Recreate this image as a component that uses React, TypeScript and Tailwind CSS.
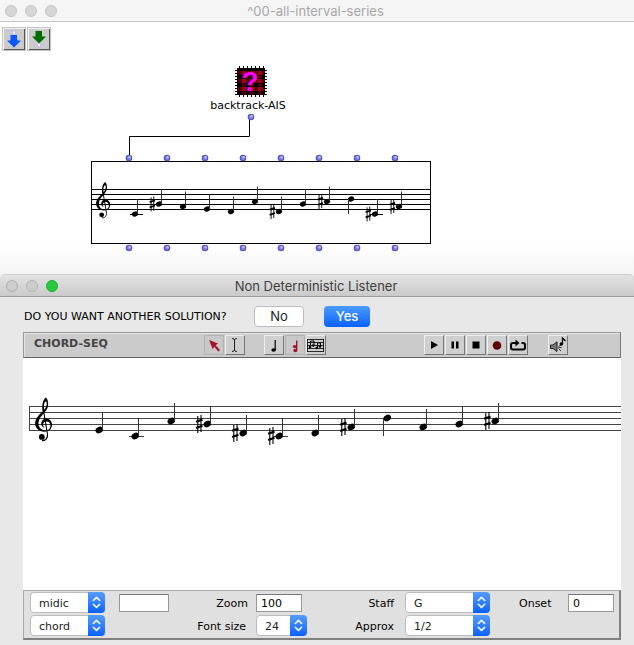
import type { ReactNode } from "react";

type Note = { step: number; sharp?: boolean; down?: boolean };

// step counts diatonic degrees above middle C
const PATCH_NOTES: Note[] = [
  { step: 0 },
  { step: 4, sharp: true },
  { step: 3 },
  { step: 2 },
  { step: 1 },
  { step: 5 },
  { step: 1, sharp: true },
  { step: 4 },
  { step: 5, sharp: true },
  { step: 6, down: true },
  { step: 0, sharp: true },
  { step: 3, sharp: true },
];

const LISTENER_NOTES: Note[] = [
  { step: 2 },
  { step: 0 },
  { step: 5 },
  { step: 4, sharp: true },
  { step: 1, sharp: true },
  { step: 0, sharp: true },
  { step: 1 },
  { step: 3, sharp: true },
  { step: 6, down: true },
  { step: 3 },
  { step: 4 },
  { step: 5, sharp: true },
];

function Clef({ x, y, scale }: { x: number; y: number; scale: number }) {
  return (
    <g transform={`translate(${x} ${y}) scale(${scale})`}>
      <path d="M7.8 14.5C6.6 9 7.4 2.5 11 0C13 2 13.6 5.5 13 8.5C12 14 6.8 17.2 4.8 21C3 24.5 3 28 5 30.5C7 33 10.5 33.4 13 32.4C16 31 16.4 26.5 13.6 24.6C11.5 23.3 8.3 24.3 8 27C7.9 28.6 8.8 29.8 10 30.3C7.3 30 5.8 27.5 6.3 25C7 21.5 11.5 20 14.4 22C18 24.5 18 30.5 14.2 33C10.5 35 4.5 34.4 1.8 30.8C-1 27 0 22.5 2.8 19C5 16.2 7 15 9 12.6C11 10.3 11.9 8 11.7 5.5C11.5 3.8 10.6 3.6 9.8 4.8C8.8 6.5 8.8 9.5 9.2 12Z" />
      <path d="M8.3 12L12.4 36C13.2 40.5 10.5 43.6 7 43" fill="none" stroke="black" strokeWidth="1.1" />
      <circle cx="6.8" cy="39.4" r="2.9" />
    </g>
  );
}

function Staff(props: { top: number; space: number; first: number; pitch: number; notes: Note[]; left: number; clefX: number; line: string }) {
  const { top, space, first, pitch, notes, left, clefX, line } = props;
  const u = space / 6;
  const c4 = top + space * 5;
  return (
    <>
      {[0, 1, 2, 3, 4].map((i) => (
        <line key={i} x1={left} x2="100%" y1={top + i * space} y2={top + i * space} stroke={line} shapeRendering="crispEdges" />
      ))}
      <Clef x={clefX} y={top - 9 * u} scale={u} />
      {notes.map((n, i) => {
        const x = first + i * pitch;
        const y = c4 - (n.step * space) / 2 - 0.5;
        const sx = Math.floor(n.down ? x - 3.6 * u : x + 3 * u) + 0.5;
        return (
          <g key={i}>
            {n.step === 0 && <line x1={x - 6 * u} x2={x + 9 * u} y1={c4} y2={c4} stroke={line} shapeRendering="crispEdges" />}
            <ellipse cx={x} cy={y} rx={3.9 * u} ry={3.1 * u} transform={`rotate(-25 ${x} ${y})`} />
            <line x1={sx} x2={sx} y1={y} y2={n.down ? y + 18 * u : y - 18 * u} stroke="#333" />
            {n.sharp && (
              <g transform={`translate(${x - 8 * u} ${y}) scale(${u})`} stroke="black">
                <path d="M-1.5 -8V9M1.7 -9V8" strokeWidth="1.1" />
                <path d="M-3.2 -2.2L3.2 -4.4M-3.2 4L3.2 1.8" strokeWidth="2.2" />
              </g>
            )}
          </g>
        );
      })}
    </>
  );
}

function Ports() {
  return (
    <div className="flex gap-8 pl-[35px]">
      {Array.from({ length: 8 }, (_, i) => (
        <Port key={i} />
      ))}
    </div>
  );
}

function Port() {
  return (
    <svg className="block h-1.5 w-1.5 shrink-0 overflow-visible" viewBox="0 0 6 6">
      <circle cx="3" cy="3" r="3.3" fill="#5051a8" />
      <circle cx="3" cy="3" r="2.4" fill="#7677e0" />
      <circle cx="3.6" cy="2.3" r="1.2" fill="#b9bcff" />
    </svg>
  );
}

function Light({ tone }: { tone: string }) {
  return <button aria-label="Window control" className={`h-3 w-3 rounded-full border ${tone}`} />;
}

function ArrowTool({ label, children }: { label: string; children: ReactNode }) {
  return (
    <button aria-label={label} className="h-6 w-6 border border-[#c4c4c4] bg-[#cbcbcb] shadow-[inset_1px_1px_0_#f4f4f4,inset_-1px_-1px_0_#555]">
      <svg className="block h-[22px] w-[22px]" viewBox="0 0 22 22">{children}</svg>
    </button>
  );
}

function Tool({ label, pressed, children }: { label: string; pressed?: boolean; children: ReactNode }) {
  return (
    <button
      aria-label={label}
      className={
        pressed
          ? "h-5 w-5 border border-[#b3b3b3] bg-[#c8c8c8]"
          : "h-5 w-5 border border-t-[#efefef] border-l-[#efefef] border-r-[#777] border-b-[#777] bg-[#cfcfcf]"
      }
    >
      <svg className="block h-[18px] w-[18px]" viewBox="0 0 18 18">{children}</svg>
    </button>
  );
}

function Picker({ id, label, options, width }: { id: string; label?: string; options: string[]; width: string }) {
  return (
    <div className={`relative h-[21px] ${width}`}>
      <select
        id={id}
        aria-label={label}
        className="h-[21px] w-full appearance-none rounded-[4px] border border-[#bdbdbd] bg-white pt-[3px] pl-2 text-[11px] leading-4 text-[#222]"
      >
        {options.map((o) => (
          <option key={o}>{o}</option>
        ))}
      </select>
      <svg className="pointer-events-none absolute top-0 right-0 h-[21px] w-[17px] rounded-r-[4px] bg-linear-to-b from-[#559bfb] to-[#0560ff]" viewBox="0 0 17 21">
        <path d="M5.3 8.5L8.5 5.4L11.7 8.5M5.3 12.3L8.5 15.4L11.7 12.3" fill="none" stroke="white" strokeWidth="1.5" strokeLinecap="round" strokeLinejoin="round" />
      </svg>
    </div>
  );
}

const field = "h-[18px] border border-[#999] border-t-[#777] bg-white px-1 text-[11px]";
const caption = "h-[21px] text-right leading-[23px] whitespace-nowrap";

function PatchWindow() {
  return (
    <section>
      <header className="flex h-[22px] items-center gap-2 border-b border-[#c8c8c8] bg-[#f5f5f5] pl-[5px]">
        <Light tone="border-[#c3c3c3] bg-[#d6d6d6]" />
        <Light tone="border-[#c3c3c3] bg-[#d6d6d6]" />
        <Light tone="border-[#c3c3c3] bg-[#d6d6d6]" />
        <h1 className="flex-1 pt-0.5 pr-[68px] text-center font-['Inter',sans-serif] text-[13px] text-[#a8a8a8]">^00-all-interval-series</h1>
      </header>
      <div className="relative h-[252px] bg-linear-to-b from-white from-88% to-[#f4f4f4]">
        <div className="flex gap-px pt-[5px] pl-0.5">
          <ArrowTool label="Add input">
            <path d="M7.5 7H14V12.5H18L11 19.5L4 12.5H7.5Z" fill="#0a57ff" />
            <rect x="9.5" y="3" width="3" height="3" fill="white" stroke="#bcbcff" />
          </ArrowTool>
          <ArrowTool label="Add output">
            <path d="M7.5 3H14V8.5H18L11 15.5L4 8.5H7.5Z" fill="#006c00" />
            <rect x="9.5" y="15.5" width="3" height="3" fill="white" stroke="#bcbcff" />
          </ArrowTool>
        </div>
        {/* connection from backtrack-AIS to the first inlet */}
        <svg className="absolute top-[97px] left-[128px] h-9 w-[123px]" viewBox="0 0 123 36">
          <path d="M121.5 0V17.5H1.5V36" fill="none" stroke="black" />
        </svg>
        <div className="absolute top-11 left-[208px] flex w-[86px] flex-col items-center">
          <svg className="h-[31px] w-8 overflow-visible" viewBox="0 0 32 31">
            <path d="M4 1H30M4 30H30" stroke="black" strokeWidth="2" strokeDasharray="1 3" />
            <path d="M1 4V29M31 4V29" stroke="black" strokeWidth="2" strokeDasharray="1 2" />
            <rect x="2" y="2" width="28" height="27" />
            <path d="M3 7H29M3 15H29M3 23H29" stroke="#58000a" strokeWidth="4" />
            <path d="M7 7H29M7 15H29M7 23H29" stroke="#9c0010" strokeWidth="4" strokeDasharray="4 4" />
            <path d="M3 11H29M3 19H29M3 27H29" stroke="#58000a" strokeWidth="3" strokeDasharray="4 4" strokeDashoffset="4" />
            <text x="15" y="25" textAnchor="middle" fill="#ff00ff" className="font-['Liberation_Sans',sans-serif] text-[28px] leading-none font-bold">?</text>
          </svg>
          <span className="pr-[6px] text-[11px] leading-[17px] whitespace-nowrap">backtrack-AIS</span>
          <Port />
        </div>
        <div className="absolute top-[133px] left-[91px] w-[340px]">
          <Ports />
          <svg className="block h-[83px] w-full border border-black">
            <Staff top={27.5} space={5} first={43} pitch={24} notes={PATCH_NOTES} left={0} clefX={4} line="black" />
          </svg>
          <div className="pt-px"><Ports /></div>
        </div>
      </div>
    </section>
  );
}

function ListenerWindow() {
  return (
    <section className="rounded-t-[5px] bg-[#e8e8e8] pb-[5px]">
      <header className="flex h-[23px] items-center gap-2 rounded-t-[5px] border-t border-b border-t-[#cfcfcf] border-b-[#9d9d9d] bg-linear-to-b from-[#e3e3e3] to-[#cacaca] pl-1.5">
        <Light tone="border-[#b0b0b0] bg-[#cdcdcd]" />
        <Light tone="border-[#b0b0b0] bg-[#cdcdcd]" />
        <Light tone="border-[#1fae34] bg-[#27c93f]" />
        <h2 className="flex-1 pt-0.5 pr-[68px] text-center font-['Inter',sans-serif] text-[13px] text-[#404040]">Non Deterministic Listener</h2>
      </header>
      <div className="flex h-[35px] items-center pt-1 pl-6 font-['Inter',sans-serif] text-[13px]">
        <p className="w-[230px] pt-0.5 font-['DejaVu_Sans',sans-serif] text-[11px]">DO YOU WANT ANOTHER SOLUTION?</p>
        <button className="h-[21px] w-[50px] rounded-[4px] border border-[#bcbcbc] bg-white text-[#222]">No</button>
        <button className="ml-5 h-[21px] w-[46px] rounded-[4px] bg-linear-to-b from-[#4b9bfd] to-[#0560ff] font-medium text-white">Yes</button>
      </div>
      <div className="mr-[13px] ml-[23px]">
        <div className="flex h-[26px] items-start border border-t-[#999] border-r-[#777] border-b-[#666] border-l-[#999] bg-[#cbcbcb] pt-0.5 pr-[52px] shadow-[inset_1px_1px_0_#e4e4e4]">
          <h3 className="w-[180px] pl-[10px] text-[11px] leading-[18px] font-bold text-[#444]">CHORD-SEQ</h3>
          <div className="flex gap-px">
            <Tool label="Select" pressed>
              <path d="M4 4L13 7.5L10.6 9.2L15 14L13.4 15.4L9.2 10.8L7.8 13.2Z" fill="#a3122a" />
            </Tool>
            <Tool label="Text cursor">
              <path d="M6 2.5Q8.5 2.5 8.5 4Q8.5 2.5 11 2.5M8.5 4V14M6 15.5Q8.5 15.5 8.5 14Q8.5 15.5 11 15.5" fill="none" stroke="#222" />
            </Tool>
          </div>
          <div className="ml-[19px] flex gap-px">
            <Tool label="Note">
              <path d="M10.2 4V14" stroke="black" strokeWidth="1.2" />
              <ellipse cx="8.6" cy="14" rx="2.3" ry="1.8" />
            </Tool>
            <Tool label="Chord" pressed>
              <path d="M10.7 4.5V14" stroke="#a3122a" strokeWidth="1.4" />
              <ellipse cx="9.3" cy="14.5" rx="2" ry="1.7" fill="#a3122a" />
              <ellipse cx="8.8" cy="10.6" rx="2" ry="1.6" fill="#a3122a" />
            </Tool>
            <Tool label="Score">
              <path d="M0 3.5H17M0 6.5H17M0 9.5H17M0 12.5H17M0 15.5H17M.5 3V16M16.5 3V16" stroke="black" strokeWidth=".8" />
              <path d="M3.5 5V11M7 5V9M10.5 7V12M10.5 7H13.5V10M3.5 5H7" stroke="black" fill="none" />
              <circle cx="3" cy="11" r="1.3" /><circle cx="6.3" cy="9.5" r="1.3" /><circle cx="9.8" cy="12" r="1.3" /><circle cx="13" cy="10.5" r="1.3" />
            </Tool>
          </div>
          <div className="ml-auto flex gap-px">
            <Tool label="Play"><path d="M6 5L13 9L6 13Z" /></Tool>
            <Tool label="Pause"><path d="M5.5 5.5H8V12.5H5.5ZM10 5.5H12.5V12.5H10Z" /></Tool>
            <Tool label="Stop"><path d="M5.5 5.5H12.5V12.5H5.5Z" /></Tool>
            <Tool label="Record"><circle cx="9" cy="9.5" r="4.3" fill="#5e0008" /></Tool>
            <Tool label="Loop">
              <path d="M12.5 7H14Q16 7 16 9V11.5Q16 13.5 14 13.5H4Q2 13.5 2 11.5V9Q2 7 4 7H8" fill="none" stroke="black" strokeWidth="2" />
              <path d="M6.5 3.5L10.5 7L6.5 10.5Z" />
            </Tool>
          </div>
          <div className="ml-5 flex">
            <Tool label="Audio">
              <path d="M1.5 9H4L8 5.8V15.5L4 12.5H1.5Z" fill="#777" stroke="#222" />
              <path d="M9.5 10.5L12 9M9.5 11.5H12.5M9.5 12.5L12 15" stroke="#333" />
              <path d="M13.5 8V2L16.5 5" fill="none" stroke="black" strokeWidth="1.3" />
              <circle cx="12.3" cy="8" r="1.7" />
            </Tool>
          </div>
        </div>
        <svg className="block h-[232px] w-full bg-white">
          <line x1="6.5" x2="6.5" y1="48" y2="73" stroke="#444" shapeRendering="crispEdges" />
          <Staff top={48.5} space={6} first={76.3} pitch={36} notes={LISTENER_NOTES} left={6} clefX={12} line="#444" />
        </svg>
        <form className="flex h-[50px] items-start border border-t-[#aaa] border-r-2 border-b-2 border-r-[#808080] border-b-[#808080] border-l-[#aaa] bg-[#e0e0e0] pt-px pl-1.5 text-[11px]">
          <div className="flex flex-col gap-0.5">
            <Picker id="slot" label="Slot" options={["midic", "channel"]} width="w-[75px]" />
            <Picker id="object" label="Object" options={["chord", "note"]} width="w-[75px]" />
          </div>
          <input aria-label="Value" className={`mt-0.5 ml-[14px] w-[50px] ${field}`} />
          <div className="ml-7 grid grid-cols-[51px_auto] gap-x-2 gap-y-0.5">
            <label htmlFor="zoom" className={caption}>Zoom</label>
            <input id="zoom" defaultValue="100" className={`mt-0.5 w-[46px] ${field}`} />
            <label htmlFor="size" className={`pr-0.5 ${caption}`}>Font size</label>
            <Picker id="size" options={["24", "36"]} width="w-[51px]" />
          </div>
          <div className="ml-[46px] grid grid-cols-[41px_auto] gap-x-[11px] gap-y-0.5">
            <label htmlFor="staff" className={caption}>Staff</label>
            <Picker id="staff" options={["G", "F"]} width="w-[85px]" />
            <label htmlFor="approx" className={caption}>Approx</label>
            <Picker id="approx" options={["1/2", "1/4"]} width="w-[85px]" />
          </div>
          <label htmlFor="onset" className="ml-[29px] w-[49px] leading-[23px]">Onset</label>
          <input id="onset" defaultValue="0" className={`mt-0.5 w-[46px] ${field}`} />
        </form>
      </div>
    </section>
  );
}

export default function App() {
  return (
    <main className="bg-[#f3f3f3] font-['DejaVu_Sans',sans-serif] text-black">
      <PatchWindow />
      <ListenerWindow />
    </main>
  );
}
